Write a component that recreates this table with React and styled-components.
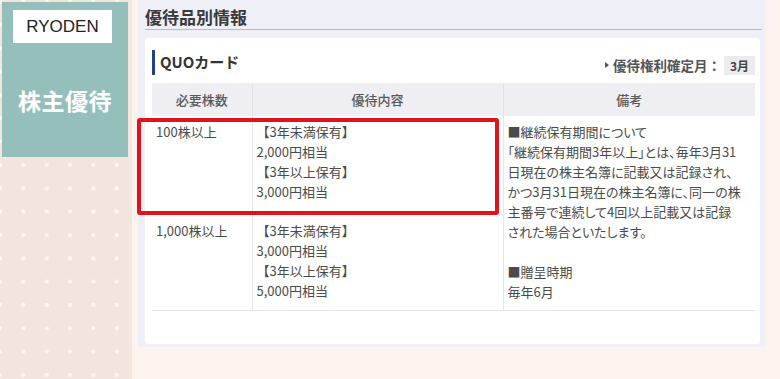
import React from "react";
import styled, { createGlobalStyle } from "styled-components";

const GlobalStyle = createGlobalStyle`
  html, body {
    margin: 0;
    padding: 0;
  }
  body {
    font-family: "Noto Sans CJK JP", "Noto Sans", sans-serif;
    color: #444;
  }
`;

const Page = styled.div`
  display: flex;
  width: 780px;
  height: 379px;
  overflow: hidden;
  background: #fcf3ee;
`;

const Sidebar = styled.div`
  width: 132px;
  flex-shrink: 0;
  background-color: #f3e5dd;
  background-image: radial-gradient(circle, #fdf9f2 1.7px, transparent 2.3px);
  background-size: 23.33px 23.33px;
  background-position: -11.65px -10px;
`;

const BrandCard = styled.div`
  margin: 2px 4px 0 2px;
  height: 155px;
  background: #95bfbb;
  padding-top: 8px;
  box-sizing: border-box;
`;

const Logo = styled.div`
  margin-left: 11px;
  width: 99px;
  height: 33px;
  background: #fff;
  display: flex;
  align-items: center;
  justify-content: center;
  font-family: "Liberation Sans", Arial, sans-serif;
  font-size: 17px;
  color: #222;
`;

const BrandTitle = styled.div`
  margin-top: 45px;
  text-align: center;
  color: #fff;
  font-size: 23px;
  font-weight: 700;
  line-height: 24px;
  letter-spacing: 0.5px;
`;

const Main = styled.div`
  flex: 1;
  padding: 0 15px 0 6px;
`;

const Panel = styled.div`
  background: #efeff7;
  padding: 0 5px 3px 7px;
`;

const Heading = styled.h2`
  margin: 0;
  padding-top: 5px;
  font-size: 17px;
  line-height: 24px;
  font-weight: 700;
  color: #3a3a3a;
  border-bottom: 1px solid #b9b9cb;
  padding-bottom: 0;
  margin-right: -2px;
`;

const Card = styled.div`
  margin-top: 8px;
  background: #fff;
  border-radius: 3px;
  padding: 12px 5px 33px 7px;
`;

const CardHead = styled.div`
  display: flex;
  align-items: center;
  justify-content: space-between;
  margin-bottom: 8px;
`;

const ItemName = styled.div`
  border-left: 3px solid #1f3f8a;
  padding-left: 5px;
  font-size: 15px;
  font-weight: 700;
  line-height: 24px;
  color: #333;
  padding-bottom: 1px;
`;

const Month = styled.div`
  display: flex;
  align-items: center;
  font-size: 13.5px;
  font-weight: 700;
  color: #555;
  padding-top: 5px;
`;

const Arrow = styled.span`
  width: 0;
  height: 0;
  border-top: 3.5px solid transparent;
  border-bottom: 3.5px solid transparent;
  border-left: 4.5px solid #555;
  margin-right: 4px;
`;

const Badge = styled.span`
  margin-left: 3px;
  background: #ececee;
  font-size: 12px;
  font-weight: 700;
  line-height: 19px;
  padding: 0 6px;
  color: #444;
`;

const TableWrap = styled.div`
  position: relative;
`;

const Table = styled.table`
  width: 100%;
  table-layout: fixed;
  border-collapse: collapse;
  font-size: 13px;
  line-height: 20px;
  color: #4a4a4a;
`;

const Th = styled.th`
  height: 33px;
  padding: 0;
  background: #eeeef3;
  font-weight: 500;
  font-size: 13px;
  color: #5a5a5a;
  text-align: center;
  border-left: ${(p) => (p.first ? "none" : "1px solid #e2e2ea")};
`;

const Row = styled.tr`
  height: ${(p) => p.h}px;
`;

const Td = styled.td`
  vertical-align: top;
  padding: 6px 5px 0 4px;
  border-bottom: 1px solid #e6e6ea;
  border-left: ${(p) => (p.first ? "none" : "1px solid #e6e6ea")};
  white-space: nowrap;
  font-feature-settings: ${(p) => (p.palt ? '"palt"' : "normal")};
`;

const Highlight = styled.div`
  position: absolute;
  left: -15px;
  top: 35px;
  width: 362px;
  height: 97px;
  border: 4px solid #e1121c;
  border-radius: 3px;
  box-sizing: border-box;
  pointer-events: none;
`;

const rows = [
  {
    shares: "100株以上",
    h: 98,
    lines: ["【3年未満保有】", "2,000円相当", "【3年以上保有】", "3,000円相当"],
  },
  {
    shares: "1,000株以上",
    h: 96,
    lines: ["【3年未満保有】", "3,000円相当", "【3年以上保有】", "5,000円相当"],
  },
];

const remarks = [
  "■継続保有期間について",
  "「継続保有期間3年以上」とは、毎年3月31",
  "日現在の株主名簿に記載又は記録され、",
  "かつ3月31日現在の株主名簿に、同一の株",
  "主番号で連続して4回以上記載又は記録",
  "された場合といたします。",
  "\u00a0",
  "■贈呈時期",
  "毎年6月",
];

const Lines = ({ items }) =>
  items.map((t, i) => (
    <React.Fragment key={i}>
      {t}
      {i < items.length - 1 && <br />}
    </React.Fragment>
  ));

const App = () => {
  return (
    <>
      <GlobalStyle />
      <Page>
        <Sidebar>
          <BrandCard>
            <Logo>RYODEN</Logo>
            <BrandTitle>株主優待</BrandTitle>
          </BrandCard>
        </Sidebar>
        <Main>
          <Panel>
            <Heading>優待品別情報</Heading>
            <Card>
              <CardHead>
                <ItemName>QUOカード</ItemName>
                <Month>
                  <Arrow />
                  優待権利確定月：<Badge>3月</Badge>
                </Month>
              </CardHead>
              <TableWrap>
                <Table>
                  <colgroup>
                    <col style={{ width: 100 }} />
                    <col style={{ width: 251 }} />
                    <col />
                  </colgroup>
                  <thead>
                    <tr>
                      <Th first>必要株数</Th>
                      <Th>優待内容</Th>
                      <Th>備考</Th>
                    </tr>
                  </thead>
                  <tbody>
                    {rows.map((r, i) => (
                      <Row key={r.shares} h={r.h}>
                        <Td first>{r.shares}</Td>
                        <Td>
                          <Lines items={r.lines} />
                        </Td>
                        {i === 0 && (
                          <Td rowSpan={2} palt>
                            <Lines items={remarks} />
                          </Td>
                        )}
                      </Row>
                    ))}
                  </tbody>
                </Table>
                <Highlight />
              </TableWrap>
            </Card>
          </Panel>
        </Main>
      </Page>
    </>
  );
};

export default App;
